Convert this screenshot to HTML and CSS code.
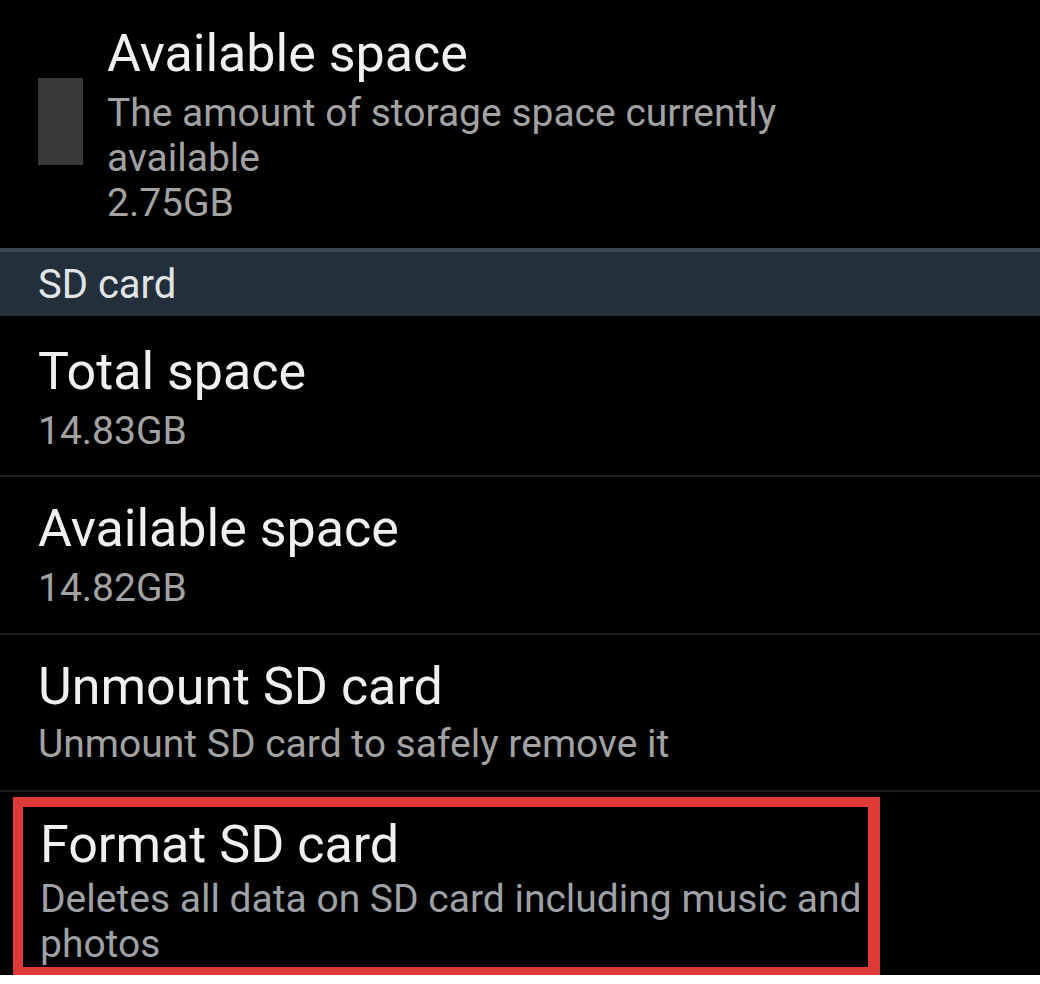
FILE: index.html
```html
<!DOCTYPE html>
<html>
<head>
<meta charset="utf-8">
<link rel="stylesheet" href="styles.css">
</head>
<body>
<div class="screen">
  <div class="item-icon">
    <div class="icon-box"></div>
    <div class="texts">
      <div class="title">Available space</div>
      <div class="sub">The amount of storage space currently<br>available<br>2.75GB</div>
    </div>
  </div>
  <div class="header">SD card</div>
  <div class="item row-total">
    <div class="title">Total space</div>
    <div class="sub">14.83GB</div>
  </div>
  <div class="divider"></div>
  <div class="item row-avail">
    <div class="title">Available space</div>
    <div class="sub">14.82GB</div>
  </div>
  <div class="divider"></div>
  <div class="item row-unmount">
    <div class="title">Unmount SD card</div>
    <div class="sub">Unmount SD card to safely remove it</div>
  </div>
  <div class="divider"></div>
  <div class="format-row">
    <div class="format-box">
      <div class="title">Format SD card</div>
      <div class="sub sub-format">Deletes all data on SD card including music and<br>photos</div>
    </div>
  </div>
</div>
<div class="strip"></div>
</body>
</html>
```
FILE: styles.css
```css
html, body {
  margin: 0;
  padding: 0;
  background: #ffffff;
}
body {
  width: 1040px;
  height: 984px;
  overflow: hidden;
  font-family: Roboto, "Noto Sans", sans-serif;
}
.screen {
  background: #000000;
  height: 975px;
  display: flex;
  flex-direction: column;
  overflow: hidden;
}
.strip {
  height: 9px;
  background: #ffffff;
}
.title {
  color: #f0f0f0;
  font-size: 52px;
  line-height: 56px;
  white-space: nowrap;
}
.sub {
  color: #a2a2a2;
  font-size: 39px;
  line-height: 45px;
  margin-top: 9px;
  white-space: nowrap;
}
.item-icon {
  display: flex;
  align-items: flex-start;
  height: 248px;
  flex-shrink: 0;
  padding-left: 38px;
  box-sizing: border-box;
  padding-top: 26px;
  gap: 24px;
}
.icon-box {
  width: 45px;
  height: 87px;
  background: #3a3a3a;
  margin-top: 52px;
  flex-shrink: 0;
}
.header {
  height: 68px;
  flex-shrink: 0;
  box-sizing: border-box;
  background: #232f3b;
  border-top: 4px solid #3b4550;
  border-bottom: 2px solid #2a3139;
  padding-top: 4px;
  color: #e2e5e8;
  font-size: 40px;
  line-height: 58px;
  padding-left: 38px;
}
.item {
  padding-left: 38px;
  box-sizing: border-box;
  flex-shrink: 0;
}
.row-total {
  height: 159px;
  padding-top: 28px;
}
.row-avail {
  height: 156px;
  padding-top: 24px;
}
.row-unmount {
  height: 155px;
  padding-top: 24px;
}
.row-unmount .sub {
  margin-top: 7px;
}
.divider {
  height: 2px;
  flex-shrink: 0;
  background: #1e1e1e;
}
.format-row {
  padding: 5px 0 0 13px;
  flex: 1;
}
.format-box {
  width: 867px;
  height: 178px;
  box-sizing: border-box;
  border: 10px solid #de3b38;
  border-bottom-width: 8px;
  border-right-width: 12px;
  padding: 10px 0 0 17px;
}
.sub-format {
  margin-top: 4px;
  color: #9ea1a5;
}
```
